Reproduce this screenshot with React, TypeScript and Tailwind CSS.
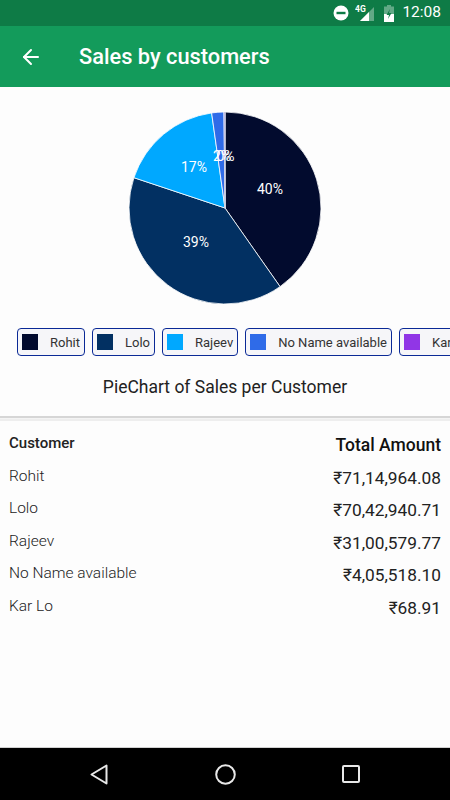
import { ArrowLeft } from 'lucide-react'

const CX = 100
const CY = 100
const R = 96

interface Slice {
  name: string
  color: string
  amount: string
  from: number
  to: number
}

const SLICES: Slice[] = [
  { name: 'Rohit', color: '#020b2e', amount: '₹71,14,964.08', from: 0, to: 145 },
  { name: 'Lolo', color: '#023062', amount: '₹70,42,940.71', from: 145, to: 288.4 },
  { name: 'Rajeev', color: '#00a8ff', amount: '₹31,00,579.77', from: 288.4, to: 352 },
  { name: 'No Name available', color: '#2f6be8', amount: '₹4,05,518.10', from: 352, to: 359.4 },
  { name: 'Kar Lo', color: '#9136e6', amount: '₹68.91', from: 359.4, to: 360 },
]

const LABELS = [
  { text: '40%', x: 145, y: 86 },
  { text: '39%', x: 71, y: 139 },
  { text: '17%', x: 69, y: 64 },
  { text: '2%', x: 97, y: 53 },
  { text: '0%', x: 100.5, y: 53 },
]

function point(deg: number) {
  const rad = (deg * Math.PI) / 180
  return `${CX + R * Math.sin(rad)} ${CY - R * Math.cos(rad)}`
}

function slicePath(s: Slice) {
  const large = s.to - s.from > 180 ? 1 : 0
  return `M${CX} ${CY} L${point(s.from)} A${R} ${R} 0 ${large} 1 ${point(s.to)} Z`
}

function StatusBar() {
  return (
    <div className="flex h-[26px] shrink-0 items-center justify-end bg-[#0e7b46] pr-[9px] text-white">
      <svg width="16" height="16" viewBox="0 0 16 16" className="mr-[6px]" aria-hidden="true">
        <circle cx="8" cy="8" r="7.5" fill="#fff" />
        <rect x="3.5" y="6.8" width="9" height="2.4" fill="#0e7b46" />
      </svg>
      <svg width="20" height="18" viewBox="0 0 20 18" className="mr-[9px]" aria-hidden="true">
        <text x="0" y="7.5" fill="#fff" fontSize="8.5" fontWeight="700" fontFamily="Roboto, sans-serif">
          4G
        </text>
        <path d="M19 3v14H5z" fill="#fff" fillOpacity="0.35" />
        <path d="M14 8v9H5z" fill="#fff" />
      </svg>
      <svg width="10" height="17" viewBox="0 0 10 17" className="mr-[8px]" aria-hidden="true">
        <path d="M3 0h4v1.5h3V17H0V1.5h3z" fill="#fff" fillOpacity="0.35" />
        <path d="M0 9h10v8H0z" fill="#fff" />
        <path d="M6 4 2.5 10H5l-1 4 3.5-6H5z" fill="#0e7b46" />
      </svg>
      <span className="text-[15.5px] leading-none">12:08</span>
    </div>
  )
}

function AppBar() {
  return (
    <div className="flex h-[61px] shrink-0 items-center bg-[#139b5b] text-white">
      <div className="flex w-[79px] shrink-0 pl-[19px]">
        <ArrowLeft size={24} strokeWidth={2} />
      </div>
      <h1 className="text-[21.8px] font-medium leading-none">Sales by customers</h1>
    </div>
  )
}

function Pie() {
  return (
    <div className="flex justify-center pt-[21px]">
      <svg width="200" height="200" viewBox="0 0 200 200" role="img" aria-label="Pie chart">
        {SLICES.map((s) => (
          <path key={s.name} d={slicePath(s)} fill={s.color} stroke="#fff" strokeWidth="0.8" />
        ))}
        <path d={`M${CX} ${CY - R} V${CY}`} stroke="#b9bfd6" strokeWidth="1.2" />
        {LABELS.map((l) => (
          <text
            key={l.text}
            x={l.x}
            y={l.y}
            fill="#fff"
            fontSize="14"
            textAnchor="middle"
            fontFamily="Roboto, sans-serif"
          >
            {l.text}
          </text>
        ))}
      </svg>
    </div>
  )
}

function Legend() {
  return (
    <div className="mt-[20px] flex gap-[7px] overflow-hidden pl-[17px]">
      {SLICES.map((s) => (
        <div
          key={s.name}
          className="flex h-[28px] shrink-0 items-center rounded-[4px] border border-[#0b2a96] bg-[#f6f6f9] pl-[4px] pr-[4px]"
        >
          <span className="h-[16px] w-[16px] shrink-0" style={{ backgroundColor: s.color }} />
          <span className="ml-[12px] whitespace-nowrap text-[13px] leading-none text-[#333]">{s.name}</span>
        </div>
      ))}
    </div>
  )
}

function Table() {
  return (
    <div className="px-[9px] pt-[14px]">
      <div className="flex items-start justify-between">
        <span className="text-[15px] font-medium leading-[17px] text-[#222]">Customer</span>
        <span className="mt-[1px] text-[17.5px] font-medium leading-[19px] text-[#111]">Total Amount</span>
      </div>
      {SLICES.map((s) => (
        <div key={s.name} className="mt-[12.5px] flex h-[20px] items-start justify-between first:mt-[13px]">
          <span className="text-[15.5px] font-light leading-[17px] text-[#222]">{s.name}</span>
          <span className="text-[17.3px] leading-[20px] text-[#222]">{s.amount}</span>
        </div>
      ))}
    </div>
  )
}

function NavBar() {
  return (
    <div className="flex h-[53px] shrink-0 items-center justify-between border-t border-[#d0d0d0] bg-black pl-[90px] pr-[90px]">
      <svg width="18" height="21" viewBox="0 0 18 21" aria-hidden="true">
        <path d="M16.5 1.5v18L1.5 10.5z" fill="none" stroke="#e8e8e8" strokeWidth="2" strokeLinejoin="round" />
      </svg>
      <svg width="21" height="21" viewBox="0 0 21 21" aria-hidden="true">
        <circle cx="10.5" cy="10.5" r="9.3" fill="none" stroke="#e8e8e8" strokeWidth="2" />
      </svg>
      <svg width="18" height="18" viewBox="0 0 18 18" aria-hidden="true">
        <rect x="1" y="1" width="16" height="16" rx="1" fill="none" stroke="#e8e8e8" strokeWidth="2" />
      </svg>
    </div>
  )
}

export default function App() {
  return (
    <div className="flex h-[800px] w-[450px] flex-col overflow-hidden bg-[#fdfdfd] font-['Roboto',sans-serif]">
      <StatusBar />
      <AppBar />
      <div className="flex-1">
        <Pie />
        <Legend />
        <p className="mt-[20px] text-center text-[17.5px] leading-[22px] text-[#222]">PieChart of Sales per Customer</p>
        <div className="mt-[18px] h-[5px] border-b-[2px] border-t-[2px] border-b-[#eeeeee] border-t-[#d6d6d6] bg-[#f4f4f4]" />
        <Table />
      </div>
      <NavBar />
    </div>
  )
}
